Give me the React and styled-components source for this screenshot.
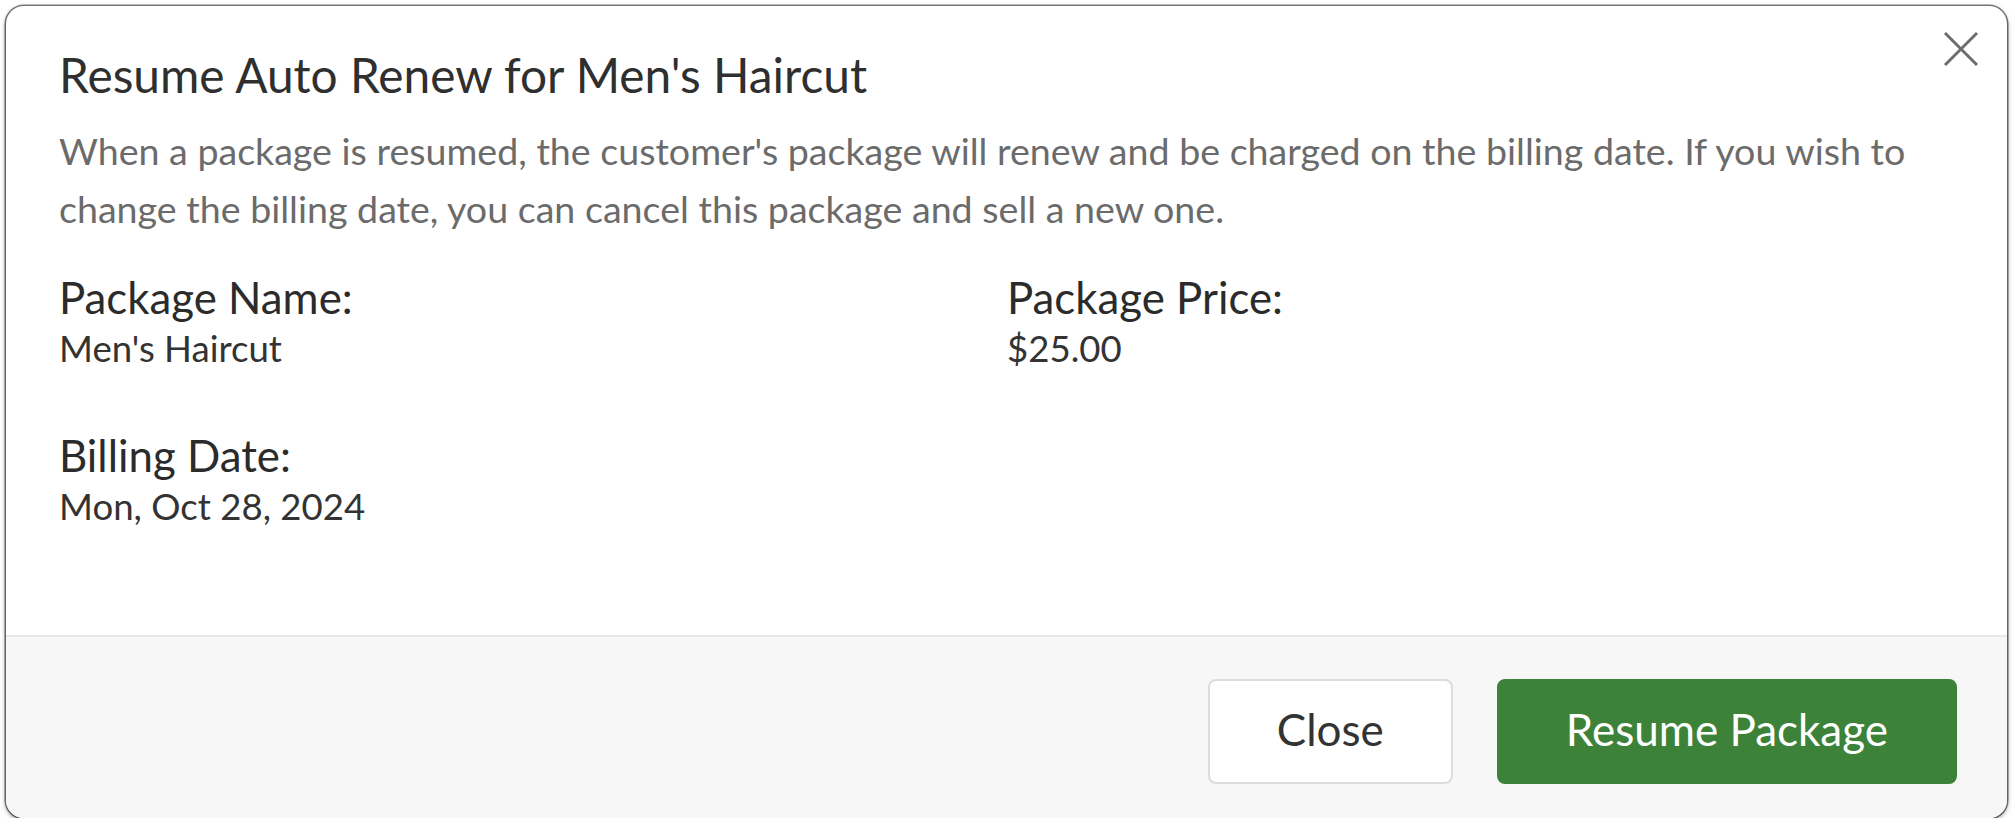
import React from "react";
import styled, { createGlobalStyle } from "styled-components";

const GlobalStyle = createGlobalStyle`
  * { box-sizing: border-box; }
  body {
    margin: 0;
    background: #ffffff;
    font-family: Lato, "Open Sans", Arial, sans-serif;
  }
`;

const Page = styled.div`
  padding: 6px 8px 0 6px;
`;

const Dialog = styled.div`
  position: relative;
  width: 2001px;
  height: 812px;
  display: flex;
  flex-direction: column;
  background: #ffffff;
  border-radius: 18px;
  overflow: hidden;
  box-shadow: 0 0 0 1.5px rgba(0, 0, 0, 0.5), 0 2px 5px rgba(0, 0, 0, 0.5);
`;

const CloseIcon = styled.button`
  position: absolute;
  top: 25px;
  right: 28px;
  width: 36px;
  height: 36px;
  padding: 0;
  border: none;
  background: transparent;
  display: flex;
  align-items: center;
  justify-content: center;
  cursor: pointer;
`;

const Body = styled.div`
  flex: 1;
  padding: 41px 52px 0 53px;
  border-bottom: 2px solid #e8e8e8;
`;

const Title = styled.h2`
  margin: 0;
  font-size: 47.8px;
  line-height: 56px;
  font-weight: 400;
  color: #2f2f2f;
`;

const Desc = styled.p`
  margin: 19px 0 0;
  font-size: 37.6px;
  line-height: 58px;
  color: #6b6b6b;
`;

const InfoGrid = styled.div`
  display: grid;
  grid-template-columns: 1fr 1fr;
  row-gap: 56px;
  margin-top: 34px;
`;

const Field = styled.div`
  display: flex;
  flex-direction: column;
`;

const Label = styled.div`
  font-size: 43.8px;
  line-height: 51px;
  color: #2b2b2b;
`;

const Value = styled.div`
  font-size: 36.6px;
  line-height: 51px;
  color: #333333;
`;

const Footer = styled.div`
  height: 181px;
  background: #f7f7f7;
  display: flex;
  justify-content: flex-end;
  align-items: flex-start;
  gap: 44px;
  padding: 42px 50px 0 0;
`;

const Button = styled.button`
  height: 105px;
  padding: 0 67px 5px;
  border-radius: 8px;
  font-family: Lato, "Open Sans", Arial, sans-serif;
  font-size: 44px;
  cursor: pointer;
  border: 2px solid ${(p) => (p.$primary ? "#3c8239" : "#dcdcdc")};
  background: ${(p) => (p.$primary ? "#3c8239" : "#ffffff")};
  color: ${(p) => (p.$primary ? "#ffffff" : "#333333")};
`;

const fields = [
  { label: "Package Name:", value: "Men's Haircut" },
  { label: "Package Price:", value: "$25.00" },
  { label: "Billing Date:", value: "Mon, Oct 28, 2024" },
];

export default function App() {
  return (
    <>
      <GlobalStyle />
      <Page>
        <Dialog>
          <CloseIcon aria-label="Close">
            <svg width="36" height="36" viewBox="0 0 36 36">
              <path d="M2 2 L34 34 M34 2 L2 34" stroke="#6e6e6e" strokeWidth="3" fill="none" />
            </svg>
          </CloseIcon>
          <Body>
            <Title>Resume Auto Renew for Men's Haircut</Title>
            <Desc>
              When a package is resumed, the customer's package will renew and be charged on the
              billing date. If you wish to change the billing date, you can cancel this package and
              sell a new one.
            </Desc>
            <InfoGrid>
              {fields.map((f) => (
                <Field key={f.label}>
                  <Label>{f.label}</Label>
                  <Value>{f.value}</Value>
                </Field>
              ))}
            </InfoGrid>
          </Body>
          <Footer>
            <Button>Close</Button>
            <Button $primary>Resume Package</Button>
          </Footer>
        </Dialog>
      </Page>
    </>
  );
}
